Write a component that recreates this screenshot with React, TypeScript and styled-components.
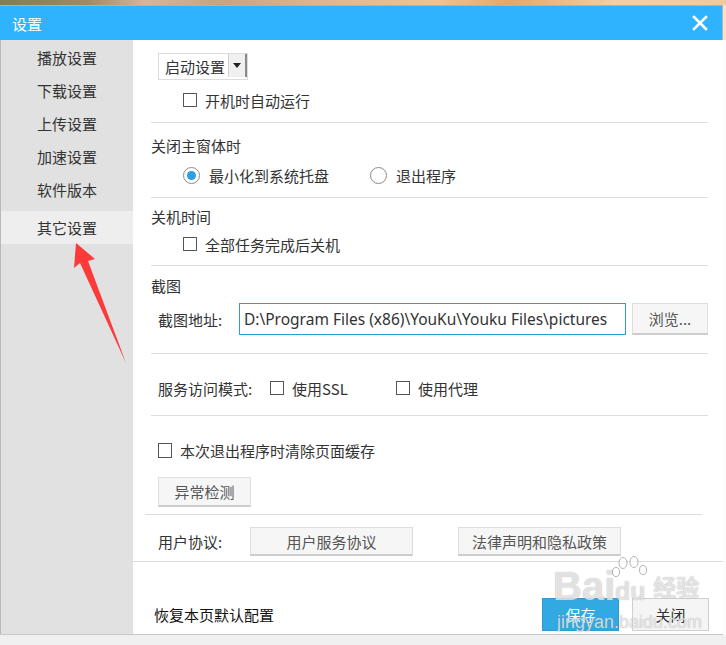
import React from "react";
import styled, { createGlobalStyle } from "styled-components";

const Global = createGlobalStyle`
  html, body { margin: 0; padding: 0; background: #f2f2f2; }
  body { font-family: "Noto Sans CJK SC", "Noto Sans", sans-serif; }
  * { box-sizing: border-box; }
`;

const Page = styled.div`
  width: 726px;
  height: 645px;
  display: flex;
  flex-direction: column;
  overflow: hidden;
  position: relative;
  background: #f0f0f0;
`;

const Photo = styled.div`
  height: 5px;
  flex: none;
  background: linear-gradient(90deg, #7d7f52 0%, #9a8c62 12%, #d9b49a 20%, #c9a27e 30%, #e3b58f 45%, #f1c28f 60%, #e7a666 70%, #f5cfa3 85%, #f3c89b 100%);
`;

const Middle = styled.div`
  display: flex;
  height: 630px;
  flex: none;
`;

const Dialog = styled.div`
  width: 723px;
  display: flex;
  flex-direction: column;
  border-right: 1px solid #b4b4b4;
  border-bottom: 1px solid #c8c8c8;
`;

const Beyond = styled.div`
  flex: 1;
  display: flex;
  flex-direction: column;
  background: #fbfbfb;
`;

const BeyondTop = styled.div`
  height: 35px;
  background: #f6e2c8;
`;

const TitleBar = styled.div`
  height: 35px;
  flex: none;
  background: #30b3fe;
  border-top: 1px solid #9ab9c8;
  display: flex;
  align-items: center;
  justify-content: space-between;
  padding: 0 12px 0 12px;
  color: #fff;
  font-size: 15px;
`;

const CloseX = styled.svg`
  width: 16px;
  height: 16px;
  margin-right: 2px;
`;

const Body = styled.div`
  flex: 1;
  display: grid;
  grid-template-columns: 133px 1fr;
  min-height: 0;
`;

const Sidebar = styled.div`
  background: #e1e1e1;
  border-left: 1px solid #b9b9b9;
  padding-top: 1px;
  display: flex;
  flex-direction: column;
`;

const NavItem = styled.div<{ $active?: boolean; $top?: number }>`
  height: 33px;
  margin-top: ${(p) => p.$top ?? 0}px;
  line-height: 33px;
  padding-left: 36px;
  font-size: 15px;
  color: #333;
  background: ${(p) => (p.$active ? "#eeeeee" : "transparent")};
`;

const Main = styled.div`
  display: flex;
  flex-direction: column;
  background: #fff;
  min-height: 0;
`;

const Content = styled.div`
  flex: 1;
  padding: 0 17px 0 18px;
  display: flex;
  flex-direction: column;
  font-size: 15px;
  color: #333;
`;

const Row = styled.div<{ $top: number; $indent?: number; $h?: number }>`
  margin-top: ${(p) => p.$top}px;
  padding-left: ${(p) => p.$indent ?? 0}px;
  height: ${(p) => p.$h ?? 22}px;
  display: flex;
  align-items: center;
  flex: none;
`;

const Divider = styled.div<{ $top: number; $shift?: number }>`
  margin-top: ${(p) => p.$top}px;
  margin-left: ${(p) => p.$shift ?? 0}px;
  margin-right: ${(p) => -(p.$shift ?? 0)}px;
  height: 1px;
  background: #dedede;
  flex: none;
`;

const Select = styled.div`
  width: 90px;
  height: 27px;
  margin-left: 7px;
  border: 1px solid #dcdcdc;
  display: flex;
  align-items: stretch;
  font-size: 15px;
`;

const SelectText = styled.div`
  flex: 1;
  padding-left: 6px;
  display: flex;
  align-items: center;
  color: #333;
`;

const SelectBtn = styled.div`
  width: 19px;
  margin: 0 0 2px 0;
  background: #f0f0f0;
  border-left: 1px solid #cfcfcf;
  border-right: 2px solid #8a8a8a;
  display: flex;
  align-items: center;
  justify-content: center;
  &::after {
    content: "";
    border-left: 4px solid transparent;
    border-right: 4px solid transparent;
    border-top: 5px solid #222;
  }
`;

const Check = styled.span<{ $h?: number }>`
  width: 14px;
  height: ${(p) => p.$h ?? 14}px;
  border: 1px solid #555;
  background: #fff;
  flex: none;
  margin-right: 8px;
`;

const Radio = styled.span<{ $on?: boolean }>`
  width: 17px;
  height: 17px;
  border-radius: 50%;
  border: 1px solid #8a8a8a;
  background: #fff;
  flex: none;
  margin-right: 9px;
  display: flex;
  align-items: center;
  justify-content: center;
  &::after {
    content: "";
    width: 9px;
    height: 9px;
    border-radius: 50%;
    background: ${(p) => (p.$on ? "#2e9fe4" : "transparent")};
  }
`;

const Label = styled.span<{ $w?: number }>`
  display: inline-block;
  width: ${(p) => (p.$w ? `${p.$w}px` : "auto")};
  white-space: nowrap;
`;

const Option = styled.label<{ $w?: number }>`
  display: flex;
  align-items: center;
  width: ${(p) => (p.$w ? `${p.$w}px` : "auto")};
  white-space: nowrap;
`;

const PathInput = styled.div`
  width: 387px;
  height: 32px;
  border: 1px solid #2f9bd9;
  display: flex;
  align-items: center;
  padding-left: 4px;
  font-family: "Noto Sans", "Noto Sans CJK SC", sans-serif;
  font-size: 15.5px;
  color: #333;
  white-space: nowrap;
  overflow: hidden;
`;

const Btn = styled.div<{ $w: number; $h: number; $ml?: number }>`
  width: ${(p) => p.$w}px;
  height: ${(p) => p.$h}px;
  margin-left: ${(p) => p.$ml ?? 0}px;
  background: #f6f6f6;
  border: 1px solid #dedede;
  border-bottom: 2px solid #cdcdcd;
  display: flex;
  align-items: center;
  justify-content: center;
  font-size: 15px;
  color: #555;
  flex: none;
`;

const Footer = styled.div`
  height: 73px;
  flex: none;
  border-top: 1px solid #dcdcdc;
  display: flex;
  align-items: center;
  padding: 33px 16px 0 21px;
`;

const Restore = styled.div`
  flex: 1;
  font-size: 15px;
  color: #111;
`;

const FootBtn = styled.div<{ $primary?: boolean }>`
  width: 77px;
  height: 33px;
  margin-left: 13px;
  display: flex;
  align-items: center;
  justify-content: center;
  font-size: 15px;
  background: ${(p) => (p.$primary ? "#33a9e3" : "#f5f5f5")};
  color: ${(p) => (p.$primary ? "#fff" : "#333")};
  border: 1px solid ${(p) => (p.$primary ? "#2d9bd3" : "#cfcfcf")};
`;

const Bottom = styled.div`
  flex: 1;
  background: #f0f0f0;
`;

const ArrowOverlay = styled.svg`
  position: absolute;
  left: 60px;
  top: 235px;
  width: 80px;
  height: 140px;
  pointer-events: none;
`;

const Watermark = styled.div`
  position: absolute;
  left: 553px;
  top: 566px;
  width: 160px;
  height: 68px;
  pointer-events: none;
  color: rgba(255, 255, 255, 0.7);
  text-shadow: 0 0 1px rgba(110, 110, 110, 0.65);
  font-family: "Liberation Sans", "Noto Sans CJK SC", sans-serif;
  font-weight: bold;
  white-space: nowrap;
`;

const WmTop = styled.div`
  display: flex;
  align-items: flex-end;
  height: 40px;
  font-size: 40px;
  line-height: 40px;
`;

const PawBox = styled.div`
  display: flex;
  flex-direction: column;
  align-items: center;
  width: 38px;
  margin-left: -4px;
`;

const Toes = styled.svg`
  width: 36px;
  height: 22px;
`;

const WmDu = styled.span`
  font-size: 25px;
  line-height: 26px;
  margin-bottom: 2px;
`;

const WmCn = styled.span`
  font-size: 23px;
  line-height: 28px;
  margin-left: 4px;
  margin-bottom: 6px;
  font-family: "Noto Sans CJK SC", sans-serif;
`;

const WmUrl = styled.div`
  font-size: 18px;
  line-height: 20px;
  margin-top: 6px;
  margin-left: 4px;
  font-weight: normal;
`;

export default function App() {
  const nav = ["播放设置", "下载设置", "上传设置", "加速设置", "软件版本"];
  return (
    <>
      <Global />
      <Page>
        <Photo />
        <Middle>
          <Dialog>
            <TitleBar>
              <span>设置</span>
              <CloseX viewBox="0 0 16 16">
                <path d="M2 2 L14 14 M14 2 L2 14" stroke="#fff" strokeWidth="2.6" strokeLinecap="square" />
              </CloseX>
            </TitleBar>
            <Body>
              <Sidebar>
                {nav.map((n) => (
                  <NavItem key={n}>{n}</NavItem>
                ))}
                <NavItem $active $top={5}>其它设置</NavItem>
              </Sidebar>
              <Main>
                <Content>
                  <Row $top={13} $h={27}>
                    <Select>
                      <SelectText>启动设置</SelectText>
                      <SelectBtn />
                    </Select>
                  </Row>
                  <Row $top={9} $indent={32}>
                    <Option>
                      <Check />
                      开机时自动运行
                    </Option>
                  </Row>
                  <Divider $top={11} />
                  <Row $top={11}>关闭主窗体时</Row>
                  <Row $top={8} $indent={32}>
                    <Option $w={187}>
                      <Radio $on />
                      最小化到系统托盘
                    </Option>
                    <Option>
                      <Radio />
                      退出程序
                    </Option>
                  </Row>
                  <Divider $top={11} />
                  <Row $top={7}>关机时间</Row>
                  <Row $top={6} $indent={32}>
                    <Option>
                      <Check />
                      全部任务完成后关机
                    </Option>
                  </Row>
                  <Divider $top={10} />
                  <Row $top={8}>截图</Row>
                  <Row $top={7} $indent={7} $h={32}>
                    <Label $w={81}>截图地址:</Label>
                    <PathInput>D:\Program Files (x86)\YouKu\Youku Files\pictures</PathInput>
                    <Btn $w={76} $h={32} $ml={6}>浏览...</Btn>
                  </Row>
                  <Divider $top={18} />
                  <Row $top={23} $indent={7}>
                    <Label $w={112}>服务访问模式:</Label>
                    <Option $w={126}>
                      <Check />
                      使用SSL
                    </Option>
                    <Option>
                      <Check />
                      使用代理
                    </Option>
                  </Row>
                  <Divider $top={16} />
                  <Row $top={23} $indent={7}>
                    <Option>
                      <Check $h={15} />
                      本次退出程序时清除页面缓存
                    </Option>
                  </Row>
                  <Row $top={16} $indent={7} $h={30}>
                    <Btn $w={93} $h={30}>异常检测</Btn>
                  </Row>
                  <Divider $top={7} $shift={-6} />
                  <Row $top={12} $indent={7} $h={29}>
                    <Label $w={92}>用户协议:</Label>
                    <Btn $w={163} $h={29}>用户服务协议</Btn>
                    <Btn $w={163} $h={29} $ml={45}>法律声明和隐私政策</Btn>
                  </Row>
                </Content>
                <Footer>
                  <Restore>恢复本页默认配置</Restore>
                  <FootBtn $primary>保存</FootBtn>
                  <FootBtn>关闭</FootBtn>
                </Footer>
              </Main>
            </Body>
          </Dialog>
          <Beyond>
            <BeyondTop />
          </Beyond>
        </Middle>
        <Bottom />
        <ArrowOverlay viewBox="0 0 80 140">
          <polygon points="16,8 35,24 28,26 66,128 20,28 14,33" fill="#fc3a3a" />
        </ArrowOverlay>
        <Watermark>
          <WmTop>
            <span>Bai</span>
            <PawBox>
              <Toes viewBox="0 0 36 22">
                <g fill="rgba(255,255,255,0.7)" stroke="rgba(120,120,120,0.6)" strokeWidth="0.9">
                  <ellipse cx="11" cy="7" rx="4" ry="5.5" />
                  <ellipse cx="22" cy="6" rx="4" ry="5.5" />
                  <ellipse cx="31" cy="14" rx="3.5" ry="4.5" />
                  <ellipse cx="4" cy="16" rx="3.5" ry="4.5" />
                </g>
              </Toes>
              <WmDu>du</WmDu>
            </PawBox>
            <WmCn>经验</WmCn>
          </WmTop>
          <WmUrl>jingyan.baidu.com</WmUrl>
        </Watermark>
      </Page>
    </>
  );
}
